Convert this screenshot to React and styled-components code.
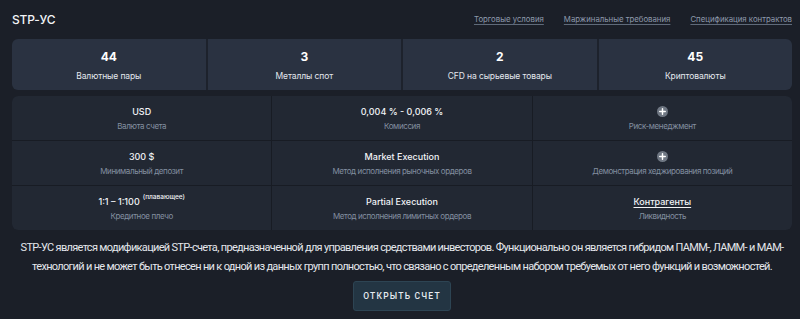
import React from 'react'
import styled, { createGlobalStyle } from 'styled-components'

const GlobalStyle = createGlobalStyle`
  body {
    margin: 0;
    background: #1b1f28;
    font-family: Inter, "Noto Sans", sans-serif;
    color: #ffffff;
  }
`

const stats = [
  { value: '44', label: 'Валютные пары' },
  { value: '3', label: 'Металлы спот' },
  { value: '2', label: 'CFD на сырьевые товары' },
  { value: '45', label: 'Криптовалюты' },
]

const links = ['Торговые условия', 'Маржинальные требования', 'Спецификация контрактов']

function PlusIcon() {
  return (
    <svg width="11" height="11" viewBox="0 0 12 12">
      <circle cx="6" cy="6" r="6" fill="#6f7783" />
      <path d="M6 3v6M3 6h6" stroke="#ffffff" strokeWidth="1.6" strokeLinecap="round" />
    </svg>
  )
}

function App() {
  return (
    <StyledPage>
      <GlobalStyle />
      <StyledHeader>
        <StyledTitle>STP-УС</StyledTitle>
        <StyledLinks>
          {links.map((l) => (
            <StyledLink key={l}>{l}</StyledLink>
          ))}
        </StyledLinks>
      </StyledHeader>

      <StyledStats>
        {stats.map((s) => (
          <StyledStat key={s.label}>
            <StyledStatValue>{s.value}</StyledStatValue>
            <StyledStatLabel>{s.label}</StyledStatLabel>
          </StyledStat>
        ))}
      </StyledStats>

      <StyledTable>
        <StyledCell>
          <StyledValue>USD</StyledValue>
          <StyledLabel>Валюта счета</StyledLabel>
        </StyledCell>
        <StyledCell>
          <StyledValue>0,004 % - 0,006 %</StyledValue>
          <StyledLabel>Комиссия</StyledLabel>
        </StyledCell>
        <StyledCell>
          <StyledValue><PlusIcon /></StyledValue>
          <StyledLabel>Риск-менеджмент</StyledLabel>
        </StyledCell>

        <StyledCell>
          <StyledValue>300 $</StyledValue>
          <StyledLabel>Минимальный депозит</StyledLabel>
        </StyledCell>
        <StyledCell>
          <StyledValue>Market Execution</StyledValue>
          <StyledLabel>Метод исполнения рыночных ордеров</StyledLabel>
        </StyledCell>
        <StyledCell>
          <StyledValue><PlusIcon /></StyledValue>
          <StyledLabel>Демонстрация хеджирования позиций</StyledLabel>
        </StyledCell>

        <StyledCell>
          <StyledValue>
            1:1 – 1:100 <StyledSup>(плавающее)</StyledSup>
          </StyledValue>
          <StyledLabel>Кредитное плечо</StyledLabel>
        </StyledCell>
        <StyledCell>
          <StyledValue>Partial Execution</StyledValue>
          <StyledLabel>Метод исполнения лимитных ордеров</StyledLabel>
        </StyledCell>
        <StyledCell>
          <StyledValue $underline>Контрагенты</StyledValue>
          <StyledLabel>Ликвидность</StyledLabel>
        </StyledCell>
      </StyledTable>

      <StyledText>
        STP-УС является модификацией STP-счета, предназначенной для управления средствами инвесторов. Функционально он является гибридом ПАММ-, ЛАММ- и МАМ-технологий и не может быть отнесен ни к одной из данных групп полностью, что связано с определенным набором требуемых от него функций и возможностей.
      </StyledText>

      <StyledButtonRow>
        <StyledButton>Открыть счет</StyledButton>
      </StyledButtonRow>
    </StyledPage>
  )
}

const StyledPage = styled.div`
  padding: 0 8px 0 12px;
  width: 780px;
`

const StyledHeader = styled.div`
  height: 39px;
  display: flex;
  align-items: center;
  justify-content: space-between;
`

const StyledTitle = styled.div`
  font-size: 12px;
  font-weight: 500;
  letter-spacing: -0.2px;
  color: #f2f4f7;
  margin-top: -1px;
`

const StyledLinks = styled.div`
  display: flex;
  gap: 20px;
  margin-top: -1px;
`

const StyledLink = styled.a`
  font-size: 7.8px;
  color: #8e9aac;
  text-decoration: underline;
  text-underline-offset: 2px;
  text-decoration-color: #5f6a7a;
`

const StyledStats = styled.div`
  display: grid;
  grid-template-columns: repeat(4, 1fr);
  gap: 2px;
  background: #1d222c;
  border-radius: 6px;
  overflow: hidden;
  height: 51px;
`

const StyledStat = styled.div`
  background: #2a3241;
  display: flex;
  flex-direction: column;
  align-items: center;
  justify-content: center;
  gap: 7px;
`

const StyledStatValue = styled.div`
  font-size: 12px;
  font-weight: 700;
  color: #ffffff;
`

const StyledStatLabel = styled.div`
  font-size: 8.5px;
  letter-spacing: -0.1px;
  color: #e3e7ed;
`

const StyledTable = styled.div`
  margin-top: 6px;
  display: grid;
  grid-template-columns: repeat(3, 1fr);
  gap: 1px;
  background: #181c24;
  border-radius: 6px;
  overflow: hidden;
`

const StyledCell = styled.div`
  background: #222833;
  height: 44px;
  display: flex;
  flex-direction: column;
  align-items: center;
  justify-content: center;
  gap: 3px;
`

const StyledValue = styled.div`
  font-size: 9px;
  font-weight: 500;
  color: #f1f3f6;
  height: 13px;
  display: flex;
  align-items: center;
  text-decoration: ${(p) => (p.$underline ? 'underline' : 'none')};
  text-underline-offset: 2px;
`

const StyledSup = styled.span`
  font-size: 6.5px;
  align-self: flex-start;
  margin-left: 3px;
  margin-top: -2px;
`

const StyledLabel = styled.div`
  font-size: 8px;
  letter-spacing: -0.4px;
  color: #838fa0;
`

const StyledText = styled.p`
  margin: 8px 0 0;
  font-family: Roboto, sans-serif;
  font-size: 11px;
  line-height: 19px;
  letter-spacing: -0.68px;
  text-align: center;
  color: #e4e7ec;
`

const StyledButtonRow = styled.div`
  display: flex;
  justify-content: center;
  margin-top: 5px;
`

const StyledButton = styled.button`
  width: 98px;
  height: 30px;
  background: #233543;
  border: 1px solid #2d4453;
  border-radius: 3px;
  color: #e6ebf0;
  font-family: Roboto, sans-serif;
  font-weight: 500;
  font-size: 8.5px;
  letter-spacing: 1.2px;
  text-transform: uppercase;
`

export default App
